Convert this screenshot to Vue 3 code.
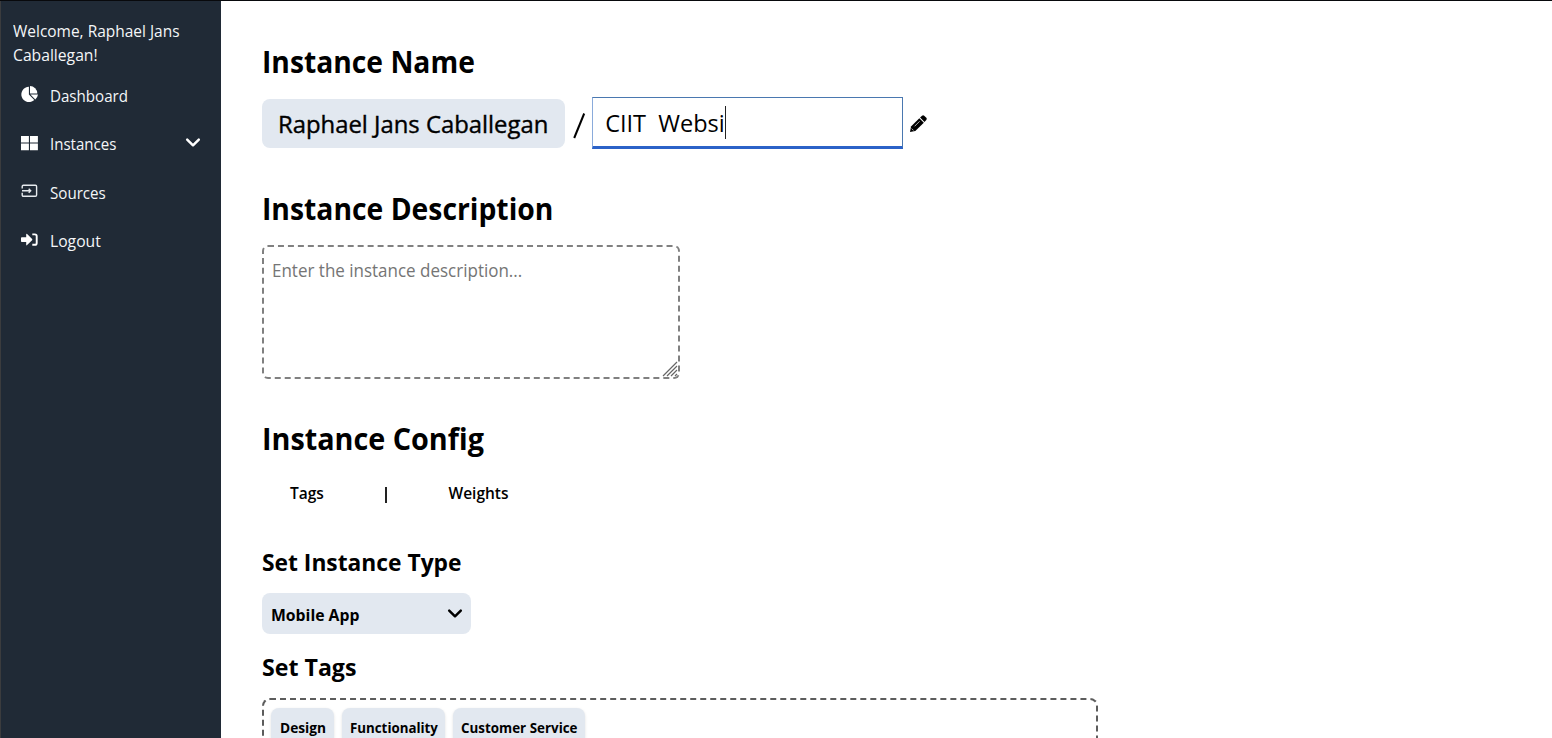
<script setup>
import { ref } from 'vue'

const user = 'Raphael Jans Caballegan'
const instanceName = ref('CIIT  Websi')
const tags = [
  { label: 'Design', cls: 'design' },
  { label: 'Functionality', cls: 'functionality' },
  { label: 'Customer Service', cls: 'service' },
]
</script>

<template>
  <div class="page">
    <aside class="sidebar">
      <p class="welcome"><span class="w1">Welcome, Raphael Jans</span><br /><span class="w2">Caballegan!</span></p>
      <nav>
        <a class="item">
          <svg class="ico" viewBox="0 0 17 17">
            <path d="M7.900.700V8.600l5.400 5.400A7.700 7.700 0 1 1 7.900.700Z" />
            <path d="M9 .1A7.600 7.600 0 0 1 16.300 7.400H9Z" />
            <path d="M9.400 8.400H17a8 8 0 0 1-2.700 5Z" />
          </svg>
          <span class="n1">Dashboard</span>
        </a>
        <a class="item">
          <svg class="ico" viewBox="0 0 17 17">
            <path d="M0 .9h7.900v6.600H0zM9 .9h7.900v6.600H9zM0 8.600h7.900v6.600H0zM9 8.600h7.900v6.600H9z" />
          </svg>
          <span class="n2">Instances</span>
          <svg class="chev" viewBox="0 0 14 9"><path d="M1.200 1.600 7 7.300l5.800-5.700" /></svg>
        </a>
        <a class="item">
          <svg class="ico line" viewBox="0 0 17 17">
            <path d="M1.200 5.600V3.400q0-1.200 1.200-1.200h12q1.200 0 1.200 1.200v8.600q0 1.200-1.200 1.200h-12q-1.200 0-1.200-1.200V9.800" />
            <path d="M1 7.700h8M7.700 5.700l2 2-2 2" />
          </svg>
          <span class="n3">Sources</span>
        </a>
        <a class="item">
          <svg class="ico" viewBox="0 0 17 17">
            <path d="M0 6q0-.8.8-.8h4.400V2.500q0-1.200.9-.4l5 4.900q.5.600 0 1.200l-5 4.900q-.9.800-.9-.4V10H.8q-.8 0-.8-.8Z" />
            <path class="stroke" d="M11.300 2.400h2.500q1.900 0 1.900 1.900v6.600q0 1.900-1.900 1.900h-2.500" />
          </svg>
          <span class="n4">Logout</span>
        </a>
      </nav>
    </aside>

    <main class="main">
      <h1><span class="h-name">Instance Name</span></h1>
      <div class="name-row">
        <div class="owner"><span>{{ user }}</span></div>
        <svg class="slash" viewBox="0 0 14 28"><path d="M12.200 1.500 2.200 26" /></svg>
        <div class="field"><span class="value">{{ instanceName }}</span><i class="caret"></i></div>
        <svg class="pencil" viewBox="0 0 17 17">
          <path d="M0 17 1 11.600 9.300 3.300l4.500 4.500-8.500 8.300Z" />
          <path d="M10.100 2.500 12 .7q1.100-1 2.200 0l2.100 2.100q1 1.100 0 2.200l-1.800 1.900Z" />
          <path class="cut" d="M4.600 11.300 9.600 6.300M1.700 13.600l1.900 1.900" />
        </svg>
      </div>

      <h1><span class="h-desc">Instance Description</span></h1>
      <div class="area">
        <span>Enter the instance description...</span>
        <svg class="grip" viewBox="0 0 16 16"><path d="M1 15 15 1M5 15 15 5M9 15l6-6M13 15l2-2" /></svg>
      </div>

      <h1 class="config"><span class="h-conf">Instance Config</span></h1>
      <div class="tabs">
        <span class="t1">Tags</span><i class="bar"></i><span class="t2">Weights</span>
      </div>

      <h2><span class="h-type">Set Instance Type</span></h2>
      <div class="select">
        <span>Mobile App</span>
        <svg class="chev" viewBox="0 0 14 9"><path d="M1.200 1.600 7 7.300l5.800-5.700" /></svg>
      </div>

      <h2 class="set-tags"><span class="h-tags">Set Tags</span></h2>
      <div class="tagbox">
        <div v-for="t in tags" :key="t.label" class="tag" :class="t.cls"><span>{{ t.label }}</span></div>
      </div>
    </main>
  </div>
</template>

<style>
body {
  margin: 0;
  background: #fff;
}
</style>

<style scoped>
.page {
  display: flex;
  box-sizing: border-box;
  width: 1552px;
  height: 738px;
  overflow: hidden;
  border-top: 1px solid #08090c;
  font-family: "Open Sans", "Noto Sans", sans-serif;
  color: #000;
}
span { display: inline-block; white-space: pre; transform-origin: 0 50%; }
svg { flex: none; display: block; overflow: visible; }

.sidebar {
  box-sizing: border-box;
  flex: none;
  width: 221px;
  padding: 17.500px 0 0 12px;
  border-left: 1px solid #3b3c3e;
  background: #202a36;
  color: #f4f6f8;
  font-size: 16px;
}
.welcome { margin: 0; line-height: 24.500px; height: 52.300px; }
.item { display: flex; align-items: center; height: 48.600px; padding-left: 8px; }
.item span { margin: 1px 0 0 11.600px; }
.w1 { transform: scaleX(.967); }
.w2 { transform: scaleX(.98); }
.n1 { transform: scaleX(.945); }
.n2 { transform: scaleX(.94); }
.n3 { transform: scaleX(.945); }
.n4 { transform: scaleX(.98); }
.ico { width: 17px; height: 17px; fill: #fff; margin-top: -1px; }
.ico.line { fill: none; stroke: #e6eaee; stroke-width: 1.400; }
.stroke { fill: none; stroke: #fff; stroke-width: 1.900; }
.chev { width: 14px; height: 9px; fill: none; stroke: currentColor; stroke-width: 2.500; stroke-linecap: round; stroke-linejoin: round; }
.item .chev { margin: -2px 21px 0 auto; color: #fff; }

.main { flex: 1; padding: 39px 0 0 41px; min-width: 0; }
h1, h2 { margin: 0; font-weight: 700; }
h1 { height: 40px; line-height: 40px; font-size: 30.500px; }
h2 { height: 32px; line-height: 33px; font-size: 23.500px; margin-top: 40px; }
.h-name { transform: translateY(.5px) scaleX(.926); }
.h-desc { transform: scaleX(.928); }
.h-conf { transform: scaleX(.943); }
.h-type { transform: translateY(.7px) scaleX(.97); }
.h-tags { transform: scaleX(.985); }

.name-row { display: flex; align-items: center; height: 52px; margin: 17px 0 39px; }
.owner {
  box-sizing: border-box;
  width: 303px;
  height: 49px;
  padding-left: 16.200px;
  border-radius: 8px;
  background: #e2e8f0;
  font-size: 24px;
  line-height: 49px;
  -webkit-text-stroke: .4px #000;
}
.owner span { transform: scaleX(.994); }
.slash { width: 14px; height: 28px; margin: 5px 6px 0 7px; fill: none; stroke: #000; stroke-width: 2; }
.field {
  box-sizing: border-box;
  display: flex;
  align-items: center;
  width: 311px;
  height: 52px;
  padding: 2px 0 0 12.200px;
  border: 1px solid #4a78b0;
  border-left-color: #8aabdb;
  border-bottom: 3px solid #2b62c8;
  font-size: 23.500px;
}
.caret { width: 1px; height: 33px; margin-top: -2px; background: #222; }
.pencil { width: 17px; height: 17px; margin-left: 7px; }
.cut { fill: none; stroke: #fff; stroke-width: .7; }

.area {
  position: relative;
  box-sizing: border-box;
  width: 418px;
  height: 134px;
  margin-top: 17px;
  padding: 9px 8px;
  border: 2px dashed #808080;
  border-radius: 6px;
  color: #757575;
  font-size: 18px;
  line-height: 28px;
}
.area span { transform: scaleX(.944); }
.grip { position: absolute; right: 0; bottom: 0; width: 16px; height: 16px; fill: none; stroke: #666; stroke-width: 1.200; }

.config { margin-top: 39px; }
.tabs { display: flex; align-items: center; height: 25px; margin-top: 23px; padding-left: 28px; font-size: 15.500px; font-weight: 600; line-height: 25px; }
.tabs + h2 { margin-top: 39px; }
.t1 { width: 94.500px; }
.bar { width: 2px; height: 16px; margin-top: 2px; background: #222; }
.t2 { margin-left: 62px; }

.select {
  box-sizing: border-box;
  display: flex;
  align-items: center;
  justify-content: space-between;
  width: 209px;
  height: 41px;
  margin-top: 16px;
  padding: 0 9px;
  border-radius: 8px;
  background: #e2e8f0;
  font-size: 16px;
  font-weight: 700;
}
.select span { margin-top: 2px; transform: scaleX(.985); }
.set-tags { margin-top: 17px; }
.tagbox {
  box-sizing: border-box;
  display: flex;
  gap: 8px;
  width: 836px;
  height: 120px;
  margin-top: 15px;
  padding: 8px 7px;
  border: 2px dashed #5c5c5c;
  border-radius: 8px;
}
.tag {
  box-sizing: border-box;
  height: 37px;
  padding-left: 8px;
  border-radius: 8px;
  background: #e2e8f0;
  box-shadow: 0 1px 3px rgba(0, 0, 0, .12);
  font-size: 14.300px;
  font-weight: 700;
  line-height: 39px;
}
.design { width: 63px; padding-left: 8.500px; }
.functionality { width: 103px; }
.service { width: 132px; }
.design span { transform: scaleX(.96); }
.functionality span { transform: scaleX(.93); }
.service span { transform: scaleX(.936); }
</style>
